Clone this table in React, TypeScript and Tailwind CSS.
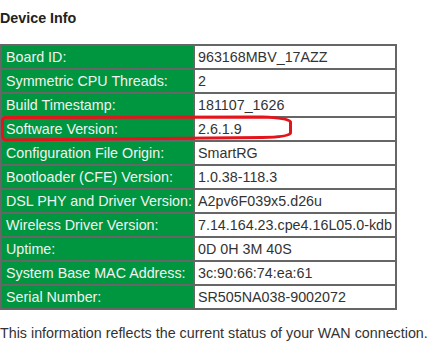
const rows: [string, string][] = [
  ['Board ID:', '963168MBV_17AZZ'],
  ['Symmetric CPU Threads:', '2'],
  ['Build Timestamp:', '181107_1626'],
  ['Software Version:', '2.6.1.9'],
  ['Configuration File Origin:', 'SmartRG'],
  ['Bootloader (CFE) Version:', '1.0.38-118.3'],
  ['DSL PHY and Driver Version:', 'A2pv6F039x5.d26u'],
  ['Wireless Driver Version:', '7.14.164.23.cpe4.16L05.0-kdb'],
  ['Uptime:', '0D 0H 3M 40S'],
  ['System Base MAC Address:', '3c:90:66:74:ea:61'],
  ['Serial Number:', 'SR505NA038-9002072'],
];

export default function App() {
  return (
    <div className="w-[430px] h-[343px] bg-white overflow-hidden font-['Liberation_Sans',Arial,sans-serif] text-[14.3px] text-[#333]">
      <h3 className="pt-[10px] leading-[16px] font-bold text-[#222]">Device Info</h3>

      <div className="relative mt-[18px] w-[397px]">
        <table className="w-[397px] border-separate border-spacing-0 border border-[#666] leading-[16px]">
          <tbody>
            {rows.map(([label, value]) => (
              <tr key={label}>
                <td className="w-[193px] border border-[#666] bg-[#009640] text-[#f2f2f2] pl-[4px] pr-[1px] py-[3px] whitespace-nowrap">
                  {label}
                </td>
                <td className="border border-[#666] bg-white text-[#333] pl-[3px] pr-[1px] py-[3px] whitespace-nowrap">
                  {value}
                </td>
              </tr>
            ))}
          </tbody>
        </table>

        {/* red highlight scribble around software version */}
        <svg className="absolute left-0 top-0 pointer-events-none" width="300" height="110" viewBox="0 44 300 110">
          <path
            d="M 6 117.5 L 262 117 Q 289 118 290.5 122 L 290.5 133 Q 289 137 262 137.5 L 6 140 Q 2.5 139.5 2.5 136 L 2.5 121 Q 2.5 117.5 6 117.5 Z"
            fill="none"
            stroke="#e3141c"
            strokeWidth="3"
          />
        </svg>
      </div>

      <p className="mt-[15px] leading-[16px]">This information reflects the current status of your WAN connection.</p>
    </div>
  );
}
